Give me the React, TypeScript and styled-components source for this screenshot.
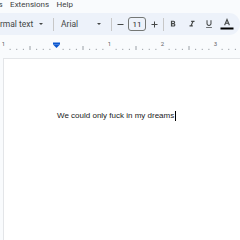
import React from "react";
import styled, { createGlobalStyle } from "styled-components";

const Global = createGlobalStyle`
  html, body { margin: 0; padding: 0; background: #f9fbfd; }
  body { font-family: Roboto, "Liberation Sans", Arial, sans-serif; }
`;

const Screen = styled.div`
  width: 240px;
  height: 240px;
  overflow: hidden;
  background: #f9fbfd;
  display: flex;
  flex-direction: column;
`;

const MenuBar = styled.div`
  height: 9px;
  display: flex;
  align-items: center;
  gap: 7.5px;
  margin-left: -17px;
  font-size: 8px;
  color: #3c4043;
  white-space: nowrap;
`;

const MenuItem = styled.span`
  line-height: 9px;
  flex: none;
`;

const Toolbar = styled.div`
  margin-top: 4px;
  margin-left: -20px;
  height: 22px;
  background: #edf2fa;
  border-radius: 11px;
  display: flex;
  align-items: center;
  color: #444746;
  font-size: 8.5px;
  white-space: nowrap;
`;

const Dropdown = styled.div<{ $w: number; $ml: number }>`
  flex: none;
  width: ${(p) => p.$w}px;
  margin-left: ${(p) => p.$ml}px;
  display: flex;
  align-items: center;
  justify-content: space-between;
  padding-right: 7px;
  box-sizing: border-box;
`;

const Arrow = styled.span`
  width: 0;
  height: 0;
  border-left: 2px solid transparent;
  border-right: 2px solid transparent;
  border-top: 2.5px solid #444746;
`;

const Sep = styled.span<{ $ml: number }>`
  width: 1px;
  height: 13px;
  background: #c7c7c7;
  margin-left: ${(p) => p.$ml}px;
  flex: none;
`;

const IconBtn = styled.span<{ $ml: number; $w?: number }>`
  margin-left: ${(p) => p.$ml}px;
  width: ${(p) => p.$w ?? 10}px;
  display: flex;
  align-items: center;
  justify-content: center;
  flex: none;
`;

const SizeBox = styled.span<{ $ml: number }>`
  margin-left: ${(p) => p.$ml}px;
  width: 18px;
  height: 14px;
  box-sizing: border-box;
  border: 1px solid #747775;
  border-radius: 3px;
  display: flex;
  align-items: center;
  justify-content: center;
  font-size: 8px;
  color: #1f1f1f;
  flex: none;
`;

const RulerWrap = styled.div`
  margin-top: 3px;
  height: 14px;
  flex: none;
`;

const Page = styled.div`
  margin-top: 6px;
  margin-left: 3px;
  flex: 1;
  background: #ffffff;
  border-left: 1px solid #e3e5e8;
  border-top: 1px solid #e3e5e8;
  padding: 52px 0 0 53px;
`;

const Line = styled.p`
  margin: 0;
  font-family: Arial, "Liberation Sans", sans-serif;
  font-size: 8px;
  line-height: 10px;
  color: #222222;
  white-space: nowrap;
  display: flex;
  align-items: center;
`;

const Caret = styled.span`
  display: inline-block;
  width: 1px;
  height: 10px;
  background: #000;
  margin-left: 0.5px;
`;

const Ruler: React.FC = () => {
  const inch = 53;
  const margin = 56.5;
  const ticks: React.ReactNode[] = [];
  for (let i = -8; i <= 28; i++) {
    const x = margin + (i * inch) / 8;
    if (x < 0 || x > 240) continue;
    const m = ((i % 8) + 8) % 8;
    if (m === 0) continue;
    const h = m === 4 ? 4 : 1.2;
    ticks.push(
      <rect key={i} x={x - 0.5} y={11 - h} width={1} height={h} fill="#9aa0a6" />
    );
  }
  const labels = [
    { x: 3.5, t: "1" },
    { x: margin + inch, t: "1" },
    { x: margin + inch * 2, t: "2" },
    { x: margin + inch * 3, t: "3" },
  ];
  return (
    <svg width="240" height="14" viewBox="0 0 240 14">
      {ticks}
      {labels.map((l, i) => (
        <text
          key={i}
          x={l.x}
          y={7}
          fontSize="6"
          fontFamily="Roboto, Arial, sans-serif"
          fill="#5f6368"
          textAnchor="middle"
        >
          {l.t}
        </text>
      ))}
      <rect x={margin - 3.5} y={3.5} width={7} height={2} fill="#0b57d0" />
      <polygon points={`${margin - 3.5},5.5 ${margin + 3.5},5.5 ${margin},9`} fill="#0b57d0" />
    </svg>
  );
};

export default function App() {
  return (
    <>
      <Global />
      <Screen>
        <MenuBar>
          <MenuItem>Tools</MenuItem>
          <MenuItem>Extensions</MenuItem>
          <MenuItem>Help</MenuItem>
        </MenuBar>
        <Toolbar>
          <Dropdown $w={61} $ml={9}>
            <span>Normal text</span>
            <Arrow />
          </Dropdown>
          <Sep $ml={3} />
          <Dropdown $w={47} $ml={7}>
            <span>Arial</span>
            <Arrow />
          </Dropdown>
          <Sep $ml={3} />
          <IconBtn $ml={5} $w={7}>
            <svg width="7" height="7" viewBox="0 0 7 7">
              <line x1="0.5" y1="3.5" x2="6.5" y2="3.5" stroke="#444746" strokeWidth="1" />
            </svg>
          </IconBtn>
          <SizeBox $ml={4}>11</SizeBox>
          <IconBtn $ml={5} $w={7}>
            <svg width="7" height="7" viewBox="0 0 7 7">
              <line x1="0.5" y1="3.5" x2="6.5" y2="3.5" stroke="#444746" strokeWidth="1" />
              <line x1="3.5" y1="0.5" x2="3.5" y2="6.5" stroke="#444746" strokeWidth="1" />
            </svg>
          </IconBtn>
          <Sep $ml={5} />
          <IconBtn $ml={4} $w={10}>
            <svg width="10" height="10" viewBox="0 0 24 24">
              <path
                fill="#444746"
                d="M15.6 10.79c.97-.67 1.65-1.770 1.65-2.79 0-2.26-1.75-4-4-4H7v14h7.04c2.090 0 3.71-1.7 3.71-3.79 0-1.52-.86-2.82-2.15-3.42zM10 6.5h3c.83 0 1.5.67 1.5 1.5s-.67 1.5-1.5 1.5h-3v-3zm3.5 9H10v-3h3.5c.83 0 1.5.67 1.5 1.5s-.67 1.5-1.5 1.5z"
              />
            </svg>
          </IconBtn>
          <IconBtn $ml={8.5} $w={10}>
            <svg width="10" height="10" viewBox="0 0 24 24">
              <path fill="#444746" d="M10 4v3h2.21l-3.42 8H6v3h8v-3h-2.21l3.42-8H18V4z" />
            </svg>
          </IconBtn>
          <IconBtn $ml={7.5} $w={10}>
            <svg width="10" height="10" viewBox="0 0 24 24">
              <path
                fill="#444746"
                d="M12 17c3.31 0 6-2.69 6-6V3h-2.5v8c0 1.93-1.57 3.5-3.5 3.5S8.5 12.93 8.5 11V3H6v8c0 3.31 2.69 6 6 6zm-7 2v2h14v-2H5z"
              />
            </svg>
          </IconBtn>
          <IconBtn $ml={5.5} $w={14}>
            <svg width="14" height="12" viewBox="0 0 14 12">
              <path d="M4.6 7.2 L7 1.5 L9.4 7.2 M5.5 5.3 H8.5" fill="none" stroke="#444746" strokeWidth="1.1" />
              <rect x="0.5" y="9.5" width="13" height="2" fill="#000" />
            </svg>
          </IconBtn>
        </Toolbar>
        <RulerWrap>
          <Ruler />
        </RulerWrap>
        <Page>
          <Line>
            We could only fuck in my dreams
            <Caret />
          </Line>
        </Page>
      </Screen>
    </>
  );
}
